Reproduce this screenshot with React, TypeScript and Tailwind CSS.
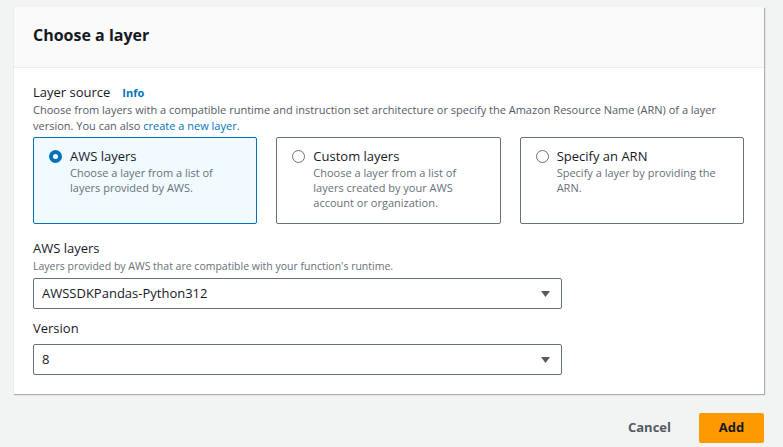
export default function App() {
  const cards = [
    { title: "AWS layers", desc: "Choose a layer from a list of layers provided by AWS.", checked: true },
    { title: "Custom layers", desc: "Choose a layer from a list of layers created by your AWS account or organization.", checked: false },
    { title: "Specify an ARN", desc: "Specify a layer by providing the ARN.", checked: false },
  ];

  return (
    <main className="w-[783px] h-[447px] bg-[#f2f3f3] pt-[7px] pl-[13px] pr-[19px] text-[#16191f] font-['Open_Sans',sans-serif] overflow-hidden">
      <div className="bg-white border-l border-[#eaeded] shadow-[1px_1px_1px_0_rgba(0,28,36,0.3)]">
        <div className="h-[61px] bg-[#fafafa] border-b border-[#eaeded] px-[19px] pb-[4px] flex items-center">
          <h2 className="text-[16px] font-bold leading-none">Choose a layer</h2>
        </div>

        <div className="pl-[19px] pr-[20px] pt-[15px] pb-[19px]">
          <div className="flex items-baseline gap-[12px] h-[18px]">
            <span className="text-[13px] leading-[18px]">Layer source</span>
            <span className="text-[11px] font-bold text-[#0073bb]">Info</span>
          </div>
          <p className="text-[11px] leading-[16px] text-[#545b64] mt-[1px]">
            Choose from layers with a compatible runtime and instruction set architecture or specify the Amazon Resource Name (ARN) of a layer version. You can also <a className="text-[#0073bb]">create a new layer</a>.
          </p>

          <div className="grid grid-cols-3 gap-[19px] mt-[3px]">
            {cards.map(c => (
              <div
                key={c.title}
                className={c.checked
                  ? "h-[87px] border border-[#0073bb] bg-[#f1faff] rounded-[2px] pl-[15px] pr-[12px] pt-[9px] flex gap-[8px]"
                  : "h-[87px] border border-[#687078] bg-white rounded-[2px] pl-[15px] pr-[12px] pt-[9px] flex gap-[8px]"}
              >
                {c.checked ? (
                  <span className="mt-[3px] w-[13px] h-[13px] rounded-full border-[4px] border-[#0073bb] bg-white shrink-0" />
                ) : (
                  <span className="mt-[3px] w-[13px] h-[13px] rounded-full border-[1.5px] border-[#687078] bg-white shrink-0" />
                )}
                <div>
                  <div className="text-[13px] leading-[18px]">{c.title}</div>
                  <div className="text-[11px] leading-[15px] text-[#687078] pr-[12px]">{c.desc}</div>
                </div>
              </div>
            ))}
          </div>

          <div className="mt-[15px] text-[13px] leading-[18px]">AWS layers</div>
          <div className="text-[10.5px] leading-[15px] text-[#687078] mt-[2px]">Layers provided by AWS that are compatible with your function's runtime.</div>
          <div className="mt-[4px] w-[529px] h-[31px] border border-[#687078] rounded-[2px] flex items-center justify-between pl-[8px] pr-[11px]">
            <span className="text-[13px]">AWSSDKPandas-Python312</span>
            <svg width="9" height="6" viewBox="0 0 9 6"><path d="M0 0h9L4.5 6z" fill="#545b64" /></svg>
          </div>

          <div className="mt-[10px] text-[13px] leading-[18px]">Version</div>
          <div className="mt-[7px] w-[529px] h-[31px] border border-[#687078] rounded-[2px] flex items-center justify-between pl-[8px] pr-[11px]">
            <span className="text-[13px]">8</span>
            <svg width="9" height="6" viewBox="0 0 9 6"><path d="M0 0h9L4.5 6z" fill="#545b64" /></svg>
          </div>
        </div>
      </div>

      <div className="flex justify-end items-center gap-[28px] mt-[19px]">
        <button className="text-[13px] font-bold text-[#545b64]">Cancel</button>
        <button className="w-[65px] h-[30px] bg-[#ff9900] rounded-[2px] text-[13px] font-bold text-[#16191f]">Add</button>
      </div>
    </main>
  );
}
